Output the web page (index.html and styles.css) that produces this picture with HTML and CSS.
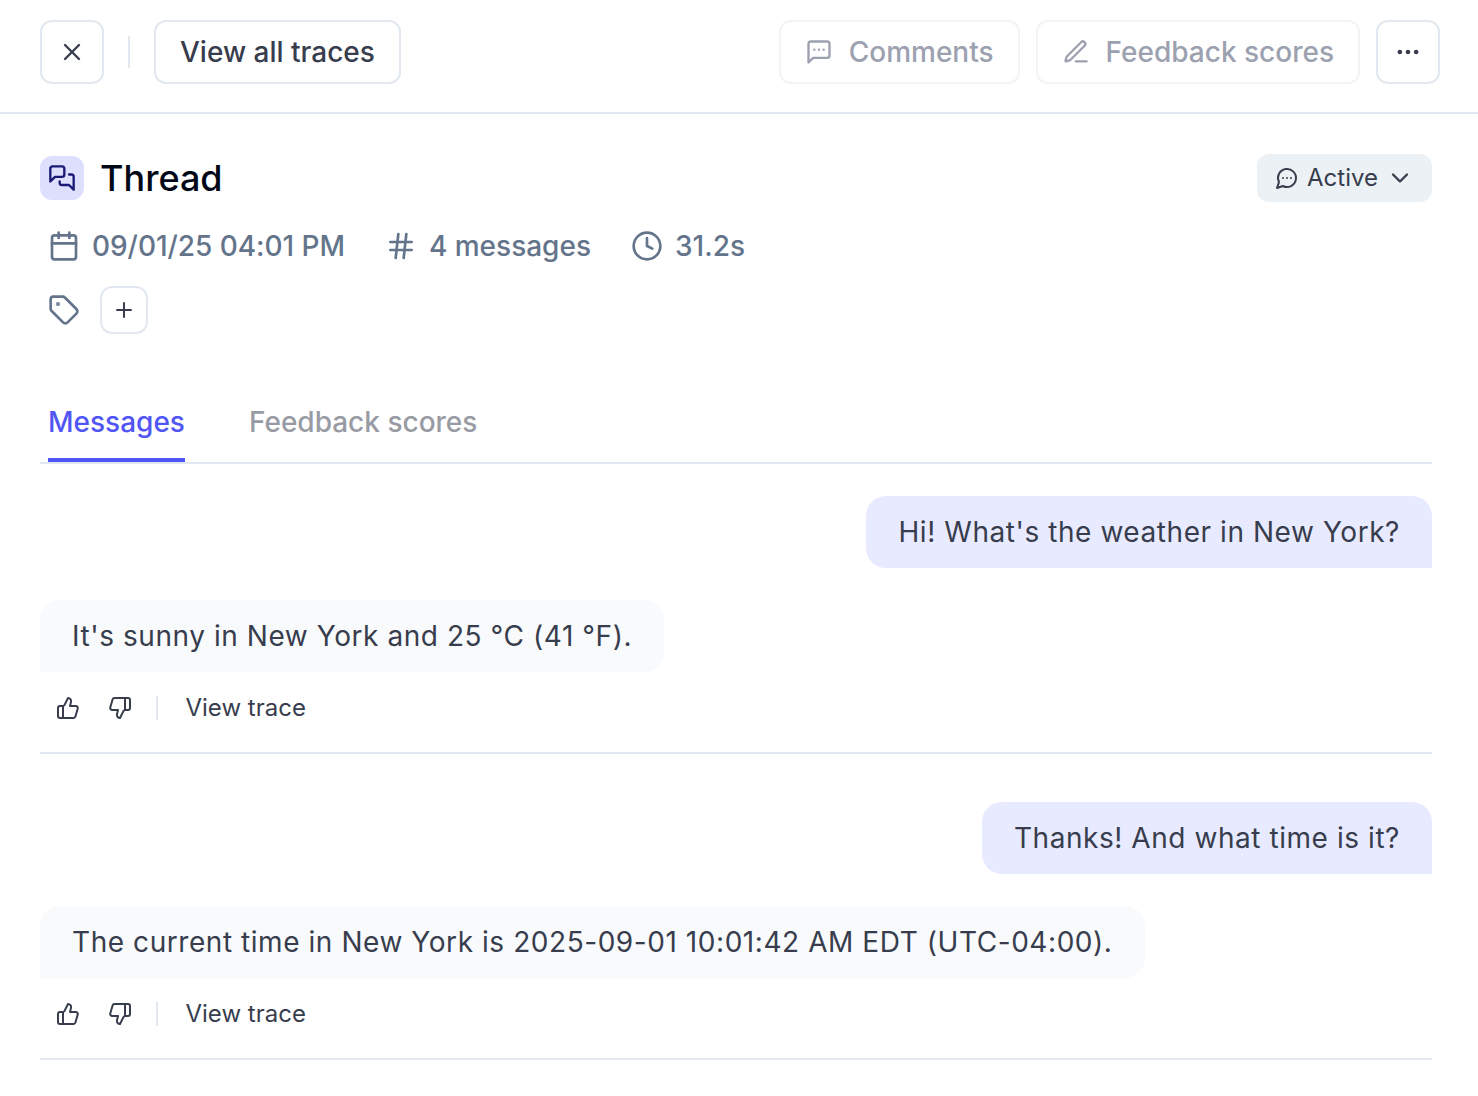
FILE: index.html
```html
<!DOCTYPE html>
<html lang="en">
<head>
<meta charset="utf-8">
<title>Thread</title>
<link rel="stylesheet" href="styles.css">
</head>
<body>
<header class="toolbar">
  <button class="btn btn-icon" aria-label="Close"><svg class="icon i28" viewBox="0 0 24 24"><path d="M18 6 6 18"/><path d="m6 6 12 12"/></svg></button>
  <span class="divider"></span>
  <button class="btn btn-traces">View all traces</button>
  <div class="toolbar-end">
    <button class="btn btn-disabled" disabled><svg class="icon i28" viewBox="0 0 24 24"><path d="M21 15a2 2 0 0 1-2 2H7l-4 4V5a2 2 0 0 1 2-2h14a2 2 0 0 1 2 2z"/><path d="M8 10h.01"/><path d="M12 10h.01"/><path d="M16 10h.01"/></svg><span>Comments</span></button>
    <button class="btn btn-disabled" disabled><svg class="icon i28" viewBox="0 0 24 24"><path d="M12 20h9"/><path d="M16.376 3.622a1 1 0 0 1 3.002 3.002L7.368 18.635a2 2 0 0 1-.855.506l-2.872.838a.5.5 0 0 1-.62-.62l.838-2.872a2 2 0 0 1 .506-.854z"/></svg><span>Feedback scores</span></button>
    <button class="btn btn-icon" aria-label="More"><svg class="icon i28" viewBox="0 0 24 24"><circle cx="12" cy="12" r="1"/><circle cx="19" cy="12" r="1"/><circle cx="5" cy="12" r="1"/></svg></button>
  </div>
</header>
<main class="thread">
  <div class="title-row">
    <span class="thread-badge"><svg class="icon i28" viewBox="0 0 24 24"><path d="M14 9a2 2 0 0 1-2 2H6l-4 4V4a2 2 0 0 1 2-2h8a2 2 0 0 1 2 2z"/><path d="M18 9h2a2 2 0 0 1 2 2v11l-4-4h-6a2 2 0 0 1-2-2v-1"/></svg></span>
    <h1 class="title">Thread</h1>
    <button class="status"><svg class="icon i24" viewBox="0 0 24 24"><path d="M7.9 20A9 9 0 1 0 4 16.1L2 22Z"/><path d="M8 12h.01"/><path d="M12 12h.01"/><path d="M16 12h.01"/></svg><span class="status-label">Active</span><svg class="icon i28" viewBox="0 0 24 24"><path d="m6 9 6 6 6-6"/></svg></button>
  </div>
  <div class="meta">
    <span class="meta-item"><svg class="icon i32" viewBox="0 0 24 24"><path d="M8 2v4"/><path d="M16 2v4"/><rect x="3" y="4" width="18" height="18" rx="2"/><path d="M3 10h18"/></svg><span class="meta-date">09/01/25 04:01 PM</span></span>
    <span class="meta-item"><svg class="icon i32" viewBox="0 0 24 24"><path d="M4 9h16"/><path d="M4 15h16"/><path d="M10 3 8 21"/><path d="m16 3-2 18"/></svg><span>4 messages</span></span>
    <span class="meta-item"><svg class="icon i32" viewBox="0 0 24 24"><circle cx="12" cy="12" r="10"/><path d="M12 6v6l4 2"/></svg><span>31.2s</span></span>
  </div>
  <div class="tags">
    <svg class="icon i32" viewBox="0 0 24 24"><path d="M12.586 2.586A2 2 0 0 0 11.172 2H4a2 2 0 0 0-2 2v7.172a2 2 0 0 0 .586 1.414l8.704 8.704a2.426 2.426 0 0 0 3.42 0l6.58-6.58a2.426 2.426 0 0 0 0-3.42z"/><circle cx="7.5" cy="7.5" r=".5" fill="currentColor"/></svg>
    <button class="btn btn-add" aria-label="Add tag"><svg class="icon i24" viewBox="0 0 24 24"><path d="M5 12h14"/><path d="M12 5v14"/></svg></button>
  </div>
  <nav class="tabs">
    <a class="tab tab-active">Messages</a>
    <a class="tab">Feedback scores</a>
  </nav>
  <section class="exchange">
    <p class="bubble bubble-user">Hi! What's the weather in New York?</p>
    <p class="bubble bubble-bot">It's sunny in New York and 25 °C (41 °F).</p>
    <div class="actions">
      <svg class="icon i24" viewBox="0 0 24 24"><path d="M7 10v12"/><path d="M15 5.88 14 10h5.83a2 2 0 0 1 1.92 2.56l-2.33 8A2 2 0 0 1 17.5 22H4a2 2 0 0 1-2-2v-8a2 2 0 0 1 2-2h2.76a2 2 0 0 0 1.79-1.11L12 2a3.13 3.13 0 0 1 3 3.88Z"/></svg>
      <svg class="icon i24" viewBox="0 0 24 24"><path d="M17 14V2"/><path d="M9 18.12 10 14H4.17a2 2 0 0 1-1.92-2.56l2.33-8A2 2 0 0 1 6.5 2H20a2 2 0 0 1 2 2v8a2 2 0 0 1-2 2h-2.76a2 2 0 0 0-1.79 1.11L12 22a3.13 3.13 0 0 1-3-3.88Z"/></svg>
      <span class="view-trace">View trace</span>
    </div>
  </section>
  <section class="exchange exchange-next">
    <p class="bubble bubble-user">Thanks! And what time is it?</p>
    <p class="bubble bubble-bot">The current time in New York is 2025-09-01 10:01:42 AM EDT (UTC-04:00).</p>
    <div class="actions">
      <svg class="icon i24" viewBox="0 0 24 24"><path d="M7 10v12"/><path d="M15 5.88 14 10h5.83a2 2 0 0 1 1.92 2.56l-2.33 8A2 2 0 0 1 17.5 22H4a2 2 0 0 1-2-2v-8a2 2 0 0 1 2-2h2.76a2 2 0 0 0 1.79-1.11L12 2a3.13 3.13 0 0 1 3 3.88Z"/></svg>
      <svg class="icon i24" viewBox="0 0 24 24"><path d="M17 14V2"/><path d="M9 18.12 10 14H4.17a2 2 0 0 1-1.92-2.56l2.33-8A2 2 0 0 1 6.5 2H20a2 2 0 0 1 2 2v8a2 2 0 0 1-2 2h-2.76a2 2 0 0 0-1.79 1.11L12 22a3.13 3.13 0 0 1-3-3.88Z"/></svg>
      <span class="view-trace">View trace</span>
    </div>
  </section>
</main>
</body>
</html>
```
FILE: styles.css
```css
* { box-sizing: border-box; }
body {
  margin: 0;
  background: #fff;
  color: #373d4d;
  font: 400 28px/40px Inter, sans-serif;
  font-optical-sizing: none;
  font-variation-settings: "opsz" 14;
  -webkit-font-smoothing: antialiased;
}
button { font: inherit; color: inherit; white-space: nowrap; }
.icon {
  display: block;
  flex: none;
  fill: none;
  stroke: currentColor;
  stroke-width: 2;
  stroke-linecap: round;
  stroke-linejoin: round;
}
.i24 { width: 24px; height: 24px; }
.i28 { width: 28px; height: 28px; }
.i32 { width: 32px; height: 32px; }

.toolbar {
  display: flex;
  align-items: center;
  height: 114px;
  padding: 20px 38px 28px 40px;
  border-bottom: 2px solid #e2e8f0;
}
.btn {
  display: flex;
  align-items: center;
  justify-content: center;
  height: 64px;
  padding: 0 24px;
  border: 2px solid #e2e8f0;
  border-radius: 12px;
  background: #fff;
  font-weight: 500;
}
.btn-icon { width: 64px; padding: 0; }
.btn-disabled { gap: 16px; border-color: #f3f4f6; color: #9ca1b0; }
.divider { width: 2px; height: 32px; margin: 0 24px; background: #e2e8f0; }
.toolbar-end { display: flex; gap: 16px; margin-left: auto; }

.thread { padding: 40px 46px 0 40px; }
.title-row { display: flex; align-items: center; height: 48px; }
.thread-badge {
  display: grid;
  place-items: center;
  width: 44px;
  height: 44px;
  border-radius: 12px;
  background: #dedefd;
  color: #1a1a75;
}
.title { margin: 0 0 0 16px; color: #020817; font-size: 36px; font-weight: 500; line-height: 48px; }
.status {
  display: flex;
  align-items: center;
  height: 48px;
  margin-left: auto;
  padding: 0 18px;
  border: 0;
  border-radius: 12px;
  background: #ebf1f5;
  font-size: 24px;
}
.status-label { margin: 0 8px; }
.meta { display: flex; gap: 40px; margin-top: 24px; padding-left: 8px; color: #64748b; font-weight: 500; }
.meta-item { display: flex; align-items: center; gap: 12px; }
.meta-date { letter-spacing: -.05px; }
.tags { display: flex; align-items: center; gap: 20px; height: 48px; margin-top: 20px; padding-left: 8px; color: #64748b; }
.btn-add { width: 48px; height: 48px; padding: 0; color: #373d4d; }

.tabs { display: flex; gap: 64px; height: 80px; margin-top: 50px; padding: 0 8px; border-bottom: 2px solid #e2e8f0; }
.tab { padding-top: 18px; color: #989ba3; font-weight: 500; }
.tab-active { color: #5155f5; border-bottom: 4px solid #5155f5; }

.exchange { display: flex; flex-direction: column; height: 290px; padding-top: 32px; border-bottom: 2px solid #e2e8f0; }
.exchange-next { height: 306px; padding-top: 48px; }
.bubble { width: max-content; margin: 0; padding: 16px 32px; border-radius: 20px; letter-spacing: .02em; white-space: nowrap; }
.bubble-user { align-self: flex-end; border-bottom-right-radius: 0; background: #e8eaff; }
.bubble-bot { margin-top: 32px; border-bottom-left-radius: 0; background: #f8fafc; }
.actions { display: flex; align-items: center; gap: 28px; height: 24px; margin-top: 24px; padding-left: 16px; font-size: 24px; }
.view-trace { display: flex; align-items: center; height: 24px; margin-left: -4px; padding-left: 27.5px; border-left: 2px solid #e2e8f0; }
```
